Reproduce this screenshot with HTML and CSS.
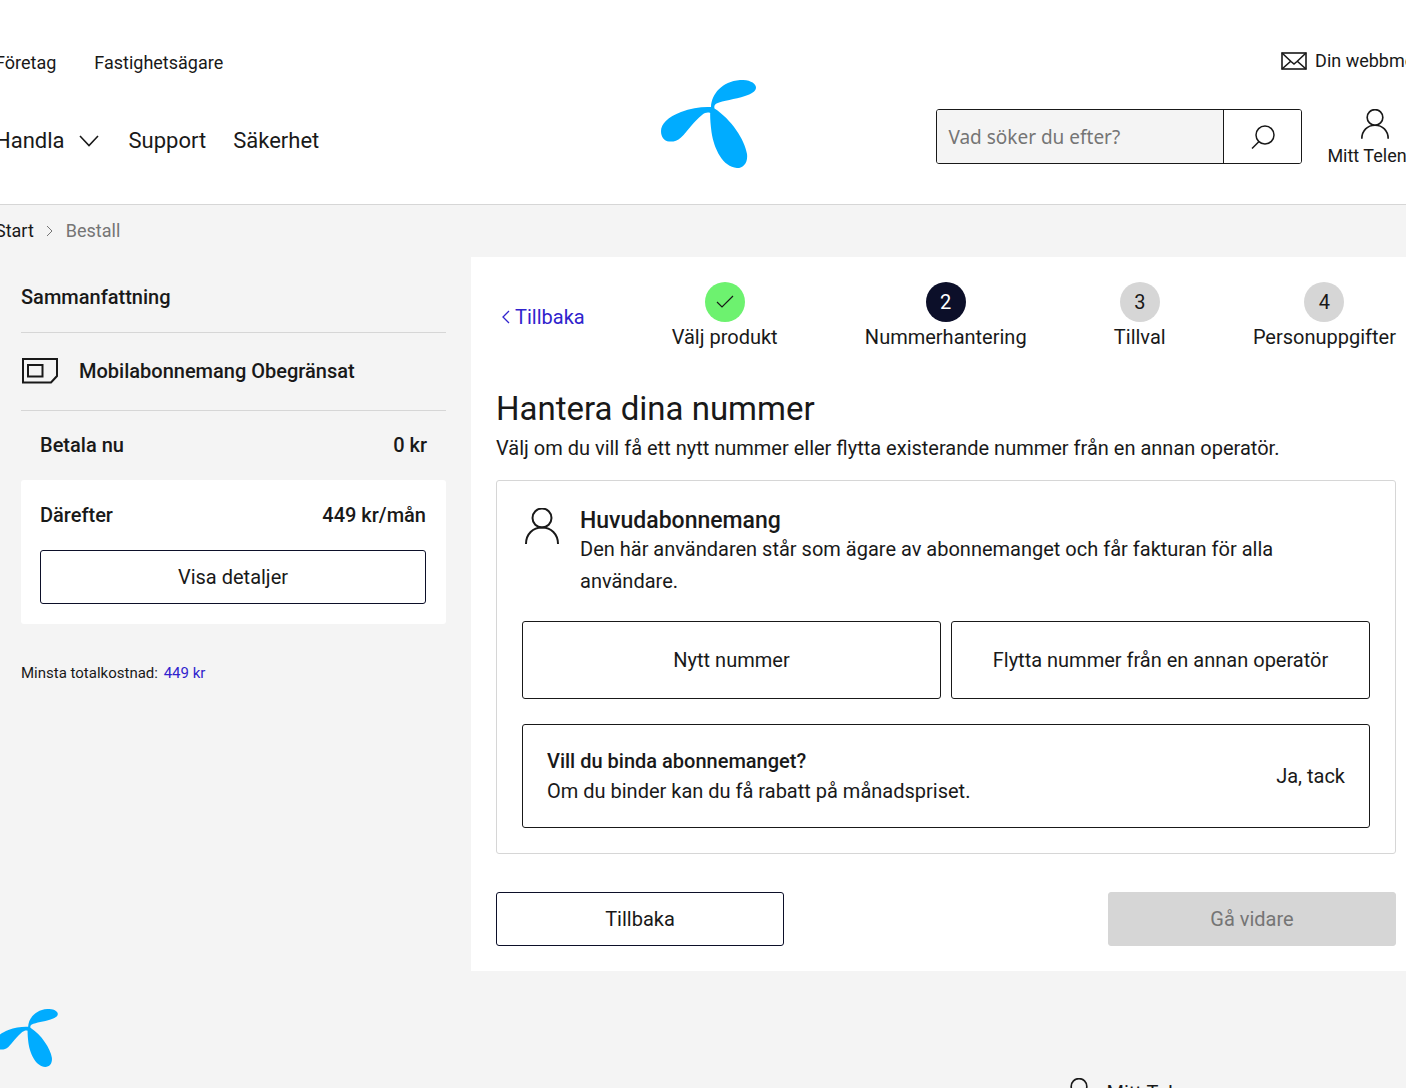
FILE: index.html
```html
<!DOCTYPE html>
<html lang="sv">
<head>
<meta charset="utf-8">
<meta name="viewport" content="width=device-width, initial-scale=1">
<title>Hantera dina nummer</title>
<link rel="stylesheet" href="styles.css">
</head>
<body>
<svg class="symbols" aria-hidden="true">
  <symbol id="logo" viewBox="0 0 95 88">
    <path fill="#00acff" d="M50 27 C50.500 14 61 1.500 79 0 C89 -.5 95 3.500 95 7.500 C95 11.500 90 14 84 16 C74 19.500 62 20.500 55.500 23.500 C53.500 24.500 53 26.500 53.500 28.500 C70 39 84 60 86 74 C87 82 83 88 76 88 C62 87 53 69 50.500 52 C49.500 44 49 37 49.200 33 C47 32 44 32.500 41 35 C33 41 27 51 20 57.500 C16 61 12 62 8 61.500 C3 61 0 57 0 51 C0 44 7 37 20 32 C30 28 41 26.500 50 27 Z"/>
  </symbol>
  <symbol id="person" viewBox="0 0 34 36">
    <g fill="none" stroke="currentColor" stroke-width="2"><circle cx="17" cy="10" r="9.500"/><path d="M1 36 C1 26 8 19.500 17 19.500 S33 26 33 36"/></g>
  </symbol>
</svg>
<div class="page">
  <header class="header">
    <nav class="header-left" aria-label="Huvudmeny">
      <div class="segments"><a href="#">Företag</a><a href="#">Fastighetsägare</a></div>
      <div class="menu">
        <a class="menu-shop" href="#">Handla
          <svg width="20" height="12" viewBox="0 0 20 12"><path d="M1 1 L10 10.500 L19 1" fill="none" stroke="currentColor" stroke-width="1.600"/></svg></a>
        <a href="#">Support</a>
        <a href="#">Säkerhet</a>
      </div>
    </nav>
    <a class="logo" href="#" aria-label="Startsida"><svg width="95" height="88"><use href="#logo"/></svg></a>
    <div class="header-right">
      <a class="webmail" href="#"><svg width="26" height="18" viewBox="0 0 26 18"><g fill="none" stroke="currentColor" stroke-width="1.600"><rect x="1" y="1" width="24" height="16"/><path d="M1 1 L10 9.500 L13 12 L16 9.500 L25 1 M1 17 L10 9 M25 17 L16 9"/></g></svg>Din webbmejl</a>
      <div class="tools">
        <form class="search" role="search">
          <input type="search" placeholder="Vad söker du efter?" aria-label="Vad söker du efter?">
          <button type="button" aria-label="Sök"><svg width="24" height="24" viewBox="0 0 24 24"><g fill="none" stroke="currentColor" stroke-width="1.500"><circle cx="14" cy="10" r="9"/><path d="M8 16.500 L1 23.500"/></g></svg></button>
        </form>
        <a class="account" href="#"><svg width="28" height="30"><use href="#person"/></svg>Mitt Telenor</a>
      </div>
    </div>
  </header>

  <nav class="crumbs" aria-label="Sökväg">
    <a href="#">Start</a>
    <svg width="8" height="10" viewBox="0 0 8 10"><path d="M1 0 L6 5 L1 10" fill="none" stroke="#757575"/></svg>
    <span>Bestall</span>
  </nav>

  <div class="layout">
    <aside class="summary">
      <h2 class="summary-title">Sammanfattning</h2>
      <div class="product">
        <svg width="38" height="26" viewBox="0 0 38 26"><g fill="none" stroke="currentColor" stroke-width="2"><path d="M2 1 H36 V18 L30 24.500 H2 Z"/><rect x="7" y="7" width="14.500" height="11.500"/></g></svg>
        <span>Mobilabonnemang Obegränsat</span>
      </div>
      <div class="price-row pay-now"><span>Betala nu</span><span>0 kr</span></div>
      <div class="after">
        <div class="price-row"><span>Därefter</span><span>449 kr/mån</span></div>
        <button class="btn" type="button">Visa detaljer</button>
      </div>
      <p class="total">Minsta totalkostnad: <a href="#">449 kr</a></p>
    </aside>

    <main class="panel">
      <div class="progress">
        <a class="back" href="#"><svg width="9" height="14" viewBox="0 0 9 14"><path d="M8 1 L2 7 L8 13" fill="none" stroke="currentColor" stroke-width="1.300"/></svg>Tillbaka</a>
        <ol class="steps">
          <li><span class="dot done"><svg width="18" height="14" viewBox="0 0 18 14"><path d="M1 7 L6 12 L17 1" fill="none" stroke="currentColor" stroke-width="1.200"/></svg></span>Välj produkt</li>
          <li><span class="dot current">2</span>Nummerhantering</li>
          <li><span class="dot">3</span>Tillval</li>
          <li><span class="dot">4</span>Personuppgifter</li>
        </ol>
      </div>
      <h1>Hantera dina nummer</h1>
      <p class="intro">Välj om du vill få ett nytt nummer eller flytta existerande nummer från en annan operatör.</p>
      <section class="card">
        <div class="user">
          <svg width="40" height="36"><use href="#person"/></svg>
          <div>
            <h2>Huvudabonnemang</h2>
            <p>Den här användaren står som ägare av abonnemanget och får fakturan för alla användare.</p>
          </div>
        </div>
        <div class="choices">
          <button class="btn choice" type="button">Nytt nummer</button>
          <button class="btn choice" type="button">Flytta nummer från en annan operatör</button>
        </div>
        <button class="binding" type="button">
          <span><strong>Vill du binda abonnemanget?</strong><br>Om du binder kan du få rabatt på månadspriset.</span>
          <span>Ja, tack</span>
        </button>
      </section>
      <div class="actions">
        <button class="btn" type="button">Tillbaka</button>
        <button class="btn" type="button" disabled>Gå vidare</button>
      </div>
    </main>
  </div>

  <footer class="footer">
    <a class="footer-logo" href="#" aria-label="Startsida"><svg width="63" height="58"><use href="#logo"/></svg></a>
    <a class="footer-account" href="#"><svg width="28" height="30"><use href="#person"/></svg>Mitt Telenor</a>
  </footer>
</div>
</body>
</html>
```
FILE: styles.css
```css
* { box-sizing: border-box; }

body {
  margin: 0;
  height: 100vh;
  overflow: hidden;
  background: #f4f4f4;
  color: #191919;
  font: 400 20px/30px Roboto, sans-serif;
}

a { color: inherit; text-decoration: none; }
h1, h2, p, ol { margin: 0; padding: 0; }
svg { display: block; flex: none; }
.symbols { display: none; }
button, input { font: inherit; color: inherit; }

/* The content frame is slightly wider than the window on both sides. */
.page { margin: 0 -15px 0 -5px; }

.header {
  display: grid;
  grid-template-columns: 1fr auto 1fr;
  height: 205px;
  background: #fff;
  border-bottom: 1px solid #d6d6d6;
}
.header-left { padding-top: 48px; }
.segments { display: flex; gap: 38px; font-size: 18px; }
.menu {
  display: flex;
  align-items: center;
  gap: 27px;
  margin-top: 48px;
  font-size: 22px;
}
.menu-shop { display: flex; align-items: center; gap: 14px; margin-right: 3px; }
.logo { padding-top: 80px; }
.header-right { margin-right: -2px; padding-top: 46px; }
.webmail {
  display: flex;
  align-items: center;
  justify-content: flex-end;
  gap: 8px;
  font-size: 18px;
}
.tools { display: flex; justify-content: flex-end; gap: 25px; margin-top: 33px; }
.search {
  display: flex;
  width: 366px;
  height: 55px;
  border: 1px solid #191919;
  border-radius: 3px;
  overflow: hidden;
}
.search input {
  flex: 1;
  min-width: 0;
  padding: 0 11px;
  border: 0;
  background: #f4f4f4;
  font-family: "Noto Sans", sans-serif;
  font-size: 19px;
}
.search input::placeholder { color: #757575; opacity: 1; }
.search button {
  display: grid;
  place-items: center;
  width: 78px;
  padding: 0;
  border: 0;
  border-left: 1px solid #191919;
  background: #fff;
}
.account {
  display: flex;
  flex-direction: column;
  align-items: center;
  gap: 2px;
  font-size: 18px;
}

.crumbs {
  display: flex;
  align-items: center;
  gap: 12px;
  height: 52px;
  font-size: 18px;
}
.crumbs span { color: #757575; }

.layout {
  display: grid;
  grid-template-columns: 425px 1fr;
  gap: 25px;
  padding-left: 26px;
  align-items: start;
}

.summary { font-weight: 500; }
.summary-title {
  padding: 25px 0 20px;
  font-size: 20px;
  font-weight: 500;
  border-bottom: 1px solid #d6d6d6;
}
.product {
  display: flex;
  align-items: center;
  gap: 20px;
  height: 78px;
  padding-bottom: 1px;
  border-bottom: 1px solid #d6d6d6;
}
.price-row { display: flex; justify-content: space-between; }
.pay-now { padding: 19px 19px 20px; }
.after {
  display: grid;
  gap: 20px;
  padding: 20px 20px 20px 19px;
  background: #fff;
  border-radius: 3px;
}
.total { margin-top: 34px; font-size: 15px; font-weight: 400; }
.total a { margin-left: 2px; color: #3023cd; }

.btn {
  min-height: 54px;
  padding: 0 16px;
  background: #fff;
  border: 1px solid #0c0f29;
  border-radius: 3px;
  font-weight: 400;
}
.btn:disabled { background: #d6d6d6; border-color: #d6d6d6; color: #757575; }

.panel { padding: 25px; background: #fff; }
.progress { display: flex; align-items: center; gap: 87px; }
.back { display: flex; align-items: center; gap: 5px; padding-left: 5px; color: #3023cd; }
.steps { display: flex; flex: 1; justify-content: space-between; list-style: none; }
.steps li { display: flex; flex-direction: column; align-items: center; }
.dot {
  display: grid;
  place-items: center;
  width: 40px;
  height: 40px;
  border-radius: 50%;
  background: #d6d6d6;
}
.done { background: #6df26f; }
.current { background: #0c0f29; color: #fff; }

h1 {
  margin-top: 37px;
  font-size: 33px;
  line-height: 40px;
  font-weight: 400;
}
.intro { margin-top: 4px; }

.card {
  margin-top: 17px;
  padding: 25px;
  border: 1px solid #d6d6d6;
  border-radius: 3px;
}
.user { display: flex; gap: 18px; }
.user > svg { margin-top: 2px; }
.user h2 { padding-top: 3px; font-size: 23px; line-height: 24px; font-weight: 500; }
.user p { line-height: 32px; }
.choices {
  display: grid;
  grid-template-columns: 1fr 1fr;
  gap: 10px;
  margin-top: 24px;
}
.choice { min-height: 78px; border-color: #191919; }
.binding {
  display: flex;
  justify-content: space-between;
  align-items: center;
  width: 100%;
  margin-top: 25px;
  padding: 21px 24px;
  text-align: left;
  background: #fff;
  border: 1px solid #191919;
  border-radius: 3px;
}
.binding strong { font-weight: 500; }

.actions { display: flex; justify-content: space-between; margin-top: 38px; }
.actions .btn { width: 32%; }

.footer {
  display: grid;
  grid-template-columns: 3fr 1fr;
  padding-top: 38px;
}
.footer-account {
  display: flex;
  align-items: center;
  gap: 14px;
  padding-top: 69px;
}
```
